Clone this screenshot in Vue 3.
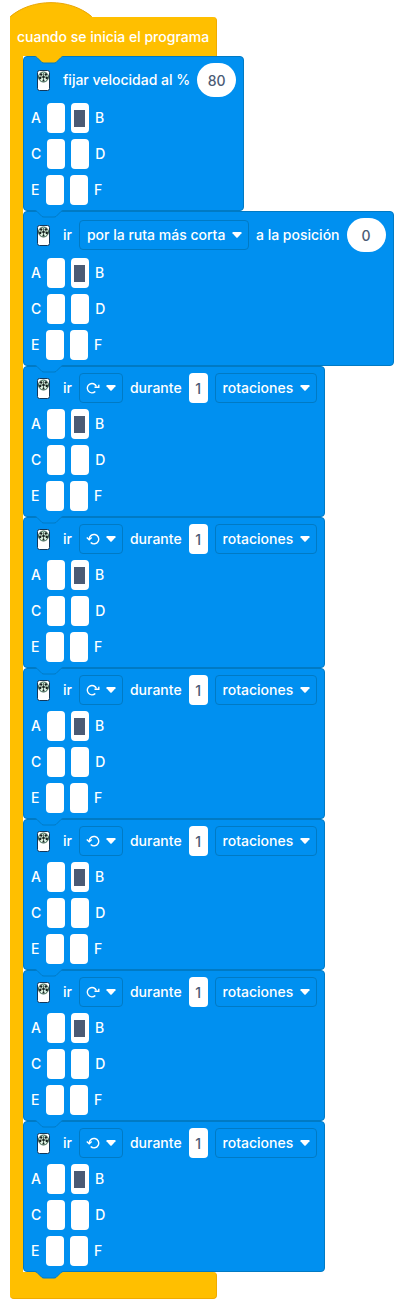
<script setup>
import { reactive } from 'vue'

const rows = [['A', 'B'], ['C', 'D'], ['E', 'F']]
const ports = () => ({ A: false, B: true, C: false, D: false, E: false, F: false })
const turn = (dir) => ({ kind: 'turn', dir, amount: '1', ports: ports() })

const blocks = reactive([
  { kind: 'speed', amount: '80', ports: ports() },
  { kind: 'goto', amount: '0', ports: ports() },
  turn('cw'),
  turn('ccw'),
  turn('cw'),
  turn('ccw'),
  turn('cw'),
  turn('ccw'),
])
</script>

<template>
  <main class="program">
    <header class="hat">
      <svg class="dome" viewBox="0 0 82 15" aria-hidden="true">
        <path class="dome-fill" d="M0 15V14.500C22 -4 60 -4 82 14.500V15Z" />
        <path class="dome-line" d="M.5 14.500C22 -4 60 -4 81.500 14.500" />
      </svg>
      <h1 class="title">cuando se inicia el programa</h1>
      <svg class="tab tab-hat" viewBox="0 0 28 8" aria-hidden="true">
        <path class="tab-fill" d="M0 0V1L2 1.500L7 6.500Q8 7 9 7H19Q20 7 21 6.500L26 1.500L28 1V0Z" />
        <path class="tab-line" d="M0 .5Q1 .5 2 1.500L7 6.500Q8 7 9 7H19Q20 7 21 6.500L26 1.500Q27 .5 28 .5" />
      </svg>
    </header>

    <ol class="stack">
      <li v-for="(block, i) in blocks" :key="i" class="block">
        <div class="line">
          <svg class="remote" viewBox="0 0 13 21" aria-hidden="true">
            <rect x=".5" y=".5" width="12" height="20" rx="2" fill="#fff" stroke="#12385c" />
            <circle cx="6.500" cy="7" r="5" fill="#dff3e4" stroke="#315c48" />
            <path d="M6.500 3V11M2.500 7H10.500" stroke="#5d7a6c" stroke-width="1" />
            <g fill="#18201e">
              <circle cx="4.200" cy="4.500" r="1.200" /><circle cx="8.800" cy="4.500" r="1.200" />
              <circle cx="3.200" cy="8" r="1.200" /><circle cx="9.800" cy="8" r="1.200" />
              <circle cx="6.500" cy="7" r="1.200" /><circle cx="6.500" cy="10.500" r="1" />
            </g>
          </svg>

          <template v-if="block.kind === 'speed'">
            <label :for="'amount' + i">fijar velocidad al %</label>
            <input :id="'amount' + i" v-model="block.amount" class="oval" inputmode="numeric" />
          </template>

          <template v-else-if="block.kind === 'goto'">
            <label :for="'mode' + i">ir</label>
            <span class="drop">
              <select :id="'mode' + i"><option>por la ruta más corta</option></select>
              <svg class="caret" viewBox="0 0 10 6" aria-hidden="true"><path d="M1 0H9Q10 .5 9.500 1.200L5.700 5.500Q5 6 4.300 5.500L.5 1.200Q0 .5 1 0Z" /></svg>
            </span>
            <label :for="'amount' + i">a la posición</label>
            <input :id="'amount' + i" v-model="block.amount" class="oval" inputmode="numeric" />
          </template>

          <template v-else>
            <label :for="'dir' + i">ir</label>
            <span class="drop">
              <select :id="'dir' + i" v-model="block.dir" class="direction">
                <option value="cw"></option>
                <option value="ccw"></option>
              </select>
              <svg v-if="block.dir === 'cw'" class="arrow" viewBox="0 0 14 12" aria-hidden="true">
                <path d="M9.300 9.500A4.700 4.700 0 1 1 10.400 4.500" />
                <path d="M8.500 5.300H12.800V2.800" />
              </svg>
              <svg v-else class="arrow" viewBox="0 0 14 12" aria-hidden="true">
                <path d="M4.700 9.500A4.700 4.700 0 1 0 3.300 6.500" />
                <path d="M.8 4.500L3.200 6.800L5.700 4.500" />
              </svg>
              <svg class="caret" viewBox="0 0 10 6" aria-hidden="true"><path d="M1 0H9Q10 .5 9.500 1.200L5.700 5.500Q5 6 4.300 5.500L.5 1.200Q0 .5 1 0Z" /></svg>
            </span>
            <label :for="'amount' + i">durante</label>
            <input :id="'amount' + i" v-model="block.amount" class="count" inputmode="numeric" />
            <span class="drop">
              <select aria-label="rotaciones"><option>rotaciones</option></select>
              <svg class="caret" viewBox="0 0 10 6" aria-hidden="true"><path d="M1 0H9Q10 .5 9.500 1.200L5.700 5.500Q5 6 4.300 5.500L.5 1.200Q0 .5 1 0Z" /></svg>
            </span>
          </template>
        </div>

        <div class="ports">
          <div v-for="row in rows" :key="row[0]" class="pair">
            <label :for="row[0] + i">{{ row[0] }}</label>
            <input :id="row[0] + i" v-model="block.ports[row[0]]" type="checkbox" />
            <input :id="row[1] + i" v-model="block.ports[row[1]]" type="checkbox" />
            <label :for="row[1] + i">{{ row[1] }}</label>
          </div>
        </div>

        <svg class="tab" viewBox="0 0 28 8" aria-hidden="true">
          <path class="tab-fill" d="M0 0V1L2 1.500L7 6.500Q8 7 9 7H19Q20 7 21 6.500L26 1.500L28 1V0Z" />
          <path class="tab-line" d="M0 .5Q1 .5 2 1.500L7 6.500Q8 7 9 7H19Q20 7 21 6.500L26 1.500Q27 .5 28 .5" />
        </svg>
      </li>
    </ol>

    <div class="foot"></div>
  </main>
</template>

<style>
body {
  margin: 0;
  background: #fff;
}
</style>

<style scoped>
.program {
  box-sizing: border-box;
  padding: 2px 0 13px 10px;
  font: 500 14px/20px Inter, "Liberation Sans", sans-serif;
  color: #fff;
}
.hat {
  position: relative;
  width: 207px;
}
.dome {
  display: block;
  width: 82px;
  height: 15px;
}
.dome-fill {
  fill: #ffbf00;
}
.dome-line {
  fill: none;
  stroke: #e9a500;
}
.title {
  box-sizing: border-box;
  height: 39px;
  margin: 0;
  padding: 10px 7px;
  border: 1px solid #f0ab00;
  border-width: 0 1px 0 0;
  border-radius: 0 4px 0 0;
  background: #ffbf00;
  font: inherit;
  white-space: nowrap;
}
.stack {
  margin: 0;
  padding: 0;
  list-style: none;
  border-left: 13px solid #ffbf00;
}
.block {
  position: relative;
  box-sizing: border-box;
  width: fit-content;
  padding: 6px 7px 5px 7px;
  border: 1px solid #007ac4;
  border-radius: 4px;
  background: #0090f0;
}
.line {
  display: flex;
  align-items: center;
  gap: 7px;
  margin-bottom: 6px;
  padding-left: 6px;
  white-space: nowrap;
}
.remote {
  width: 13px;
  height: 21px;
  margin-right: 6px;
}
input,
select {
  box-sizing: border-box;
  margin: 0;
  appearance: none;
  font: inherit;
}
.oval,
.count {
  padding: 0;
  border: 0;
  background: #fff;
  color: #4b5b75;
  text-align: center;
}
.oval {
  width: 39px;
  height: 34px;
  border-radius: 17px;
}
.count {
  width: 19px;
  height: 30px;
  border-radius: 4px;
}
.drop {
  position: relative;
  display: flex;
}
select {
  height: 30px;
  padding: 0 22px 0 7px;
  border: 1px solid #007ac4;
  border-radius: 4px;
  background: transparent;
  color: #fff;
}
.direction {
  width: 44px;
}
.caret {
  position: absolute;
  top: 12px;
  right: 7px;
  width: 10px;
  height: 6px;
  fill: #fff;
  pointer-events: none;
}
.arrow {
  position: absolute;
  top: 9px;
  left: 7px;
  width: 14px;
  height: 12px;
  fill: none;
  stroke: #fff;
  stroke-width: 1.4;
  pointer-events: none;
}
.ports {
  display: grid;
  gap: 6px;
}
.pair {
  display: flex;
  align-items: center;
}
.pair input {
  width: 18px;
  height: 30px;
  margin-left: 6px;
  border: 0;
  border-radius: 4px;
  background: #fff;
}
.pair input:checked {
  border: 1px solid #fff;
  border-width: 7px 4px 6px 3px;
  background: #4b5b75;
}
.pair label:first-child {
  min-width: 9px;
}
.pair label:last-child {
  margin-left: 6px;
}
.tab {
  position: absolute;
  z-index: 1;
  top: 100%;
  left: 11px;
  width: 28px;
  height: 8px;
}
.tab-fill {
  fill: #0090f0;
}
.tab-line {
  fill: none;
  stroke: #007ac4;
}
.tab-hat {
  left: 25px;
}
.tab-hat .tab-fill {
  fill: #ffbf00;
}
.foot {
  box-sizing: border-box;
  width: 207px;
  height: 27px;
  border: 1px solid #f0ab00;
  border-width: 0 1px 1px 0;
  border-radius: 0 4px 4px 4px;
  background: #ffbf00;
}
</style>
